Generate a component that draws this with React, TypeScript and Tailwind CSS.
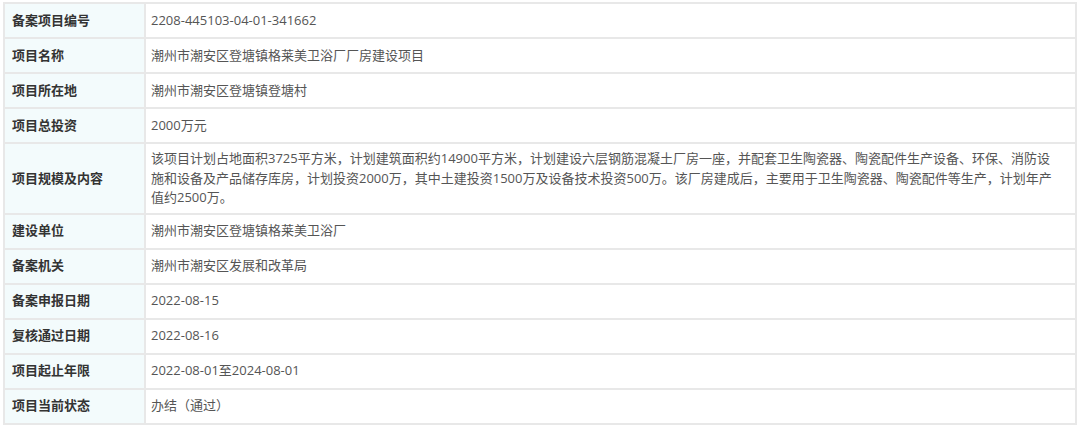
const rows: { label: string; value: string[] }[] = [
  { label: "备案项目编号", value: ["2208-445103-04-01-341662"] },
  { label: "项目名称", value: ["潮州市潮安区登塘镇格莱美卫浴厂厂房建设项目"] },
  { label: "项目所在地", value: ["潮州市潮安区登塘镇登塘村"] },
  { label: "项目总投资", value: ["2000万元"] },
  {
    label: "项目规模及内容",
    value: [
      "该项目计划占地面积3725平方米，计划建筑面积约14900平方米，计划建设六层钢筋混凝土厂房一座，并配套卫生陶瓷器、陶瓷配件生产设备、环保、消防设",
      "施和设备及产品储存库房，计划投资2000万，其中土建投资1500万及设备技术投资500万。该厂房建成后，主要用于卫生陶瓷器、陶瓷配件等生产，计划年产",
      "值约2500万。",
    ],
  },
  { label: "建设单位", value: ["潮州市潮安区登塘镇格莱美卫浴厂"] },
  { label: "备案机关", value: ["潮州市潮安区发展和改革局"] },
  { label: "备案申报日期", value: ["2022-08-15"] },
  { label: "复核通过日期", value: ["2022-08-16"] },
  { label: "项目起止年限", value: ["2022-08-01至2024-08-01"] },
  { label: "项目当前状态", value: ["办结（通过）"] },
];

export default function App() {
  return (
    <div
      className="w-[1080px] h-[426px] bg-white pt-[2px] pl-[3px]"
      style={{ fontFamily: '"Open Sans", "Noto Sans CJK SC", sans-serif' }}
    >
      <table className="w-[1074px] border-collapse border-2 border-[#e8e8e8] text-[13px]">
        <tbody>
          {rows.map((r) => (
            <tr key={r.label} className="border-b-2 border-[#e8e8e8]">
              <td className="w-[141px] h-[35px] p-0 bg-[#f3fbfc] pl-[7px] font-bold text-[#333] border-r-2 border-[#e8e8e8] align-middle">
                {r.label}
              </td>
              <td className="pl-[5px] pr-[8px] py-[5px] leading-[19.5px] text-[#555] align-middle">
                {r.value.map((line, i) => (
                  <div key={i} className="whitespace-nowrap">
                    {line}
                  </div>
                ))}
              </td>
            </tr>
          ))}
        </tbody>
      </table>
    </div>
  );
}
